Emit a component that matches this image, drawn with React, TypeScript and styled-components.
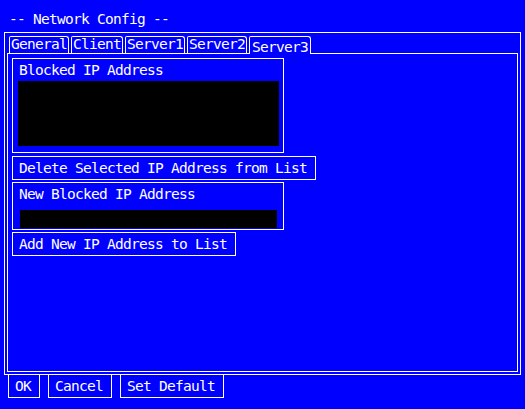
import React from "react";
import styled, { createGlobalStyle } from "styled-components";

const GlobalStyle = createGlobalStyle`
  html, body {
    margin: 0;
    padding: 0;
    background: #0000ff;
  }
  body {
    width: 525px;
    height: 409px;
    overflow: hidden;
    color: #ffffff;
    font-family: "DejaVu Sans Mono", "Liberation Mono", monospace;
    font-size: 14.5px;
    letter-spacing: -0.73px;
  }
`;

const Screen = styled.div`
  width: 525px;
  height: 409px;
  display: flex;
  flex-direction: column;
  background: #0000ff;
`;

const Title = styled.div`
  box-sizing: border-box;
  height: 32px;
  padding: 11px 0 0 9px;
  line-height: 16px;
  white-space: pre;
`;

const Frame = styled.div`
  box-sizing: border-box;
  margin-left: 4px;
  width: 517px;
  height: 343px;
  border: 1px solid #ffffff;
  padding: 2px;
  display: flex;
  flex-direction: column;
`;

const TabRow = styled.div`
  display: flex;
  align-items: flex-start;
  gap: 2px;
  height: 17px;
  margin: 1px 0 0 2px;
  position: relative;
  z-index: 1;
`;

const Tab = styled.div<{ $active?: boolean }>`
  box-sizing: border-box;
  height: ${(p) => (p.$active ? 18 : 17)}px;
  border: 1px solid #ffffff;
  border-bottom: none;
  border-radius: 2px 3px 0 0;
  padding: ${(p) => (p.$active ? "3px 2px 0 2px" : "0 1px")};
  line-height: 15px;
  background: #0000ff;
  white-space: nowrap;
`;

const Panel = styled.div`
  flex: 1;
  border: 1px solid #ffffff;
  padding: 4px 0 0 4px;
  display: flex;
  flex-direction: column;
  align-items: flex-start;
`;

const GroupBox = styled.div<{ $compact?: boolean }>`
  box-sizing: border-box;
  width: 272px;
  border: 1px solid #ffffff;
  padding: ${(p) => (p.$compact ? "3px 4px 1px 5px" : "3px 4px 6px 5px")};
  margin-top: ${(p) => (p.$compact ? 2 : 0)}px;
  display: flex;
  flex-direction: column;
`;

const GroupLabel = styled.div`
  line-height: 16px;
  padding-left: 1px;
  white-space: pre;
`;

const ListBox = styled.div`
  width: 261px;
  height: 65px;
  margin-top: 3px;
  background: #000000;
`;

const InputBox = styled.div`
  width: 257px;
  height: 18px;
  margin: 8px 0 0 2px;
  background: #000000;
`;

const ActionButton = styled.button<{ $gap?: number }>`
  box-sizing: border-box;
  margin: ${(p) => p.$gap ?? 0}px 0 0 0;
  border: 1px solid #ffffff;
  border-radius: 0;
  padding: 3px 8px 3px 6px;
  background: #0000ff;
  color: #ffffff;
  font: inherit;
  letter-spacing: inherit;
  line-height: 16px;
  white-space: pre;
  cursor: pointer;
`;

const ButtonRow = styled.div`
  display: flex;
  gap: 8px;
  padding-left: 8px;
  margin-top: -1px;
`;

const tabs = ["General", "Client", "Server1", "Server2", "Server3"];

export default function App() {
  return (
    <>
      <GlobalStyle />
      <Screen>
        <Title>-- Network Config --</Title>
        <Frame>
          <TabRow>
            {tabs.map((t) => (
              <Tab key={t} $active={t === "Server3"}>
                {t}
              </Tab>
            ))}
          </TabRow>
          <Panel>
            <GroupBox>
              <GroupLabel>Blocked IP Address</GroupLabel>
              <ListBox />
            </GroupBox>
            <ActionButton $gap={3}>Delete Selected IP Address from List</ActionButton>
            <GroupBox $compact>
              <GroupLabel>New Blocked IP Address</GroupLabel>
              <InputBox />
            </GroupBox>
            <ActionButton $gap={2}>Add New IP Address to List</ActionButton>
          </Panel>
        </Frame>
        <ButtonRow>
          <ActionButton>OK</ActionButton>
          <ActionButton>Cancel</ActionButton>
          <ActionButton>Set Default</ActionButton>
        </ButtonRow>
      </Screen>
    </>
  );
}
